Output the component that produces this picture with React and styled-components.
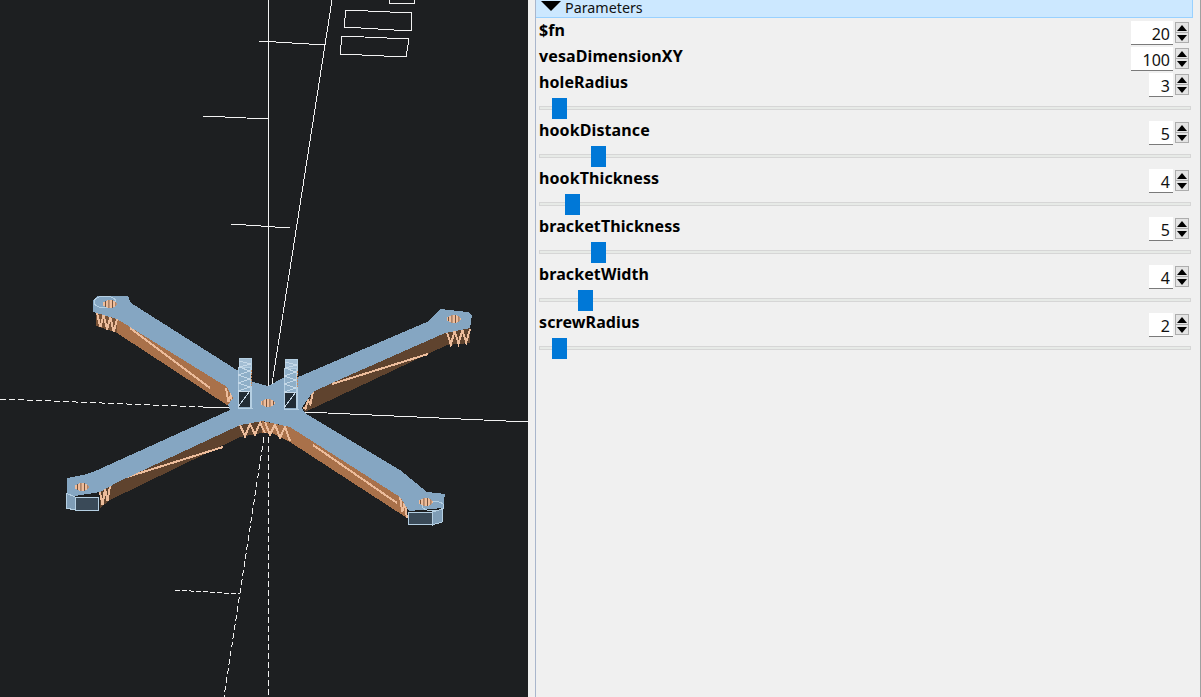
import React from "react";
import styled, { createGlobalStyle } from "styled-components";

const GlobalStyle = createGlobalStyle`
  html, body { margin: 0; height: 100%; overflow: hidden; background: #f0f0f0; }
  #root { height: 100%; }
`;

const Window = styled.div`
  display: flex;
  width: 1201px;
  height: 697px;
  overflow: hidden;
  font-family: "Noto Sans", "Open Sans", sans-serif;
  color: #000;
`;
const Viewport = styled.div`
  flex: 0 0 528px;
  height: 697px;
  background: #1d1f21;
`;
const Drawing = styled.svg`
  display: block;
  shape-rendering: crispEdges;
`;
const Splitter = styled.div`
  flex: 0 0 7px;
  background: #f0f0f0;
  border-right: 1px solid #a9b6cc;
`;
const Panel = styled.div`
  flex: 1;
  display: flex;
  flex-direction: column;
  padding-right: 7px;
  border-right: 1px solid #a0a0a0;
  background: #f0f0f0;
`;
const Header = styled.div`
  display: flex;
  align-items: center;
  gap: 4px;
  box-sizing: border-box;
  height: 18px;
  padding: 0 0 1px 5px;
  background: #cce8ff;
  border-bottom: 1px solid #99d1ff;
  border-right: 1px solid #99d1ff;
  font-size: 14.3px;
  line-height: 16px;
  color: #111;
`;
const Arrow = styled.span`
  width: 0;
  height: 0;
  margin-top: -5px;
  border-left: 10px solid transparent;
  border-right: 10px solid transparent;
  border-top: 10px solid #000;
`;
const Params = styled.div`
  display: flex;
  flex-direction: column;
  padding: 3px 4px 0 3px;
`;
const Row = styled.div`
  display: flex;
  align-items: flex-start;
  justify-content: space-between;
  height: 24px;
  margin-bottom: ${(p) => (p.$plain ? "2px" : "0")};
`;
const Label = styled.div`
  font-size: 16px;
  font-weight: 700;
  letter-spacing: 0.1px;
  line-height: 18px;
`;
const Spin = styled.div`
  display: flex;
  gap: 2px;
`;
const SpinValue = styled.div`
  box-sizing: border-box;
  width: ${(p) => p.$width}px;
  height: 24px;
  padding: 3px 3px 0 0;
  background: #fff;
  border-bottom: 1px solid #7a7a7a;
  text-align: right;
  font-size: 16px;
  line-height: 20px;
  color: #111;
`;
const SpinButtons = styled.div`
  display: flex;
  flex-direction: column;
  margin-top: 1px;
`;
const SpinButton = styled.div`
  box-sizing: border-box;
  display: flex;
  align-items: center;
  justify-content: center;
  width: 14px;
  height: 11px;
  background: #e4e4e4;
  border: 1px solid #adadad;
  margin-top: ${(p) => (p.$down ? "-1px" : "0")};
`;
const Tri = styled.span`
  width: 0;
  height: 0;
  border-left: 5px solid transparent;
  border-right: 5px solid transparent;
  ${(p) => (p.$down ? "border-top: 6px solid #000;" : "border-bottom: 6px solid #000;")}
`;
const Slider = styled.div`
  position: relative;
  height: 24px;
  margin-right: -2px;
`;
const Track = styled.div`
  position: absolute;
  left: 0;
  right: 0;
  top: 9px;
  height: 2px;
  background: #e7eae7;
  border: 1px solid #d6d6d6;
`;
const Thumb = styled.div`
  position: absolute;
  top: 1px;
  width: 15px;
  height: 21px;
  background: #0078d7;
`;

const params = [
  { name: "$fn", value: 20, width: 42 },
  { name: "vesaDimensionXY", value: 100, width: 42 },
  { name: "holeRadius", value: 3, width: 24, thumb: 13 },
  { name: "hookDistance", value: 5, width: 24, thumb: 52 },
  { name: "hookThickness", value: 4, width: 24, thumb: 26 },
  { name: "bracketThickness", value: 5, width: 24, thumb: 52 },
  { name: "bracketWidth", value: 4, width: 24, thumb: 39 },
  { name: "screwRadius", value: 2, width: 24, thumb: 13 },
];

const TOP = "#85a6c2";
const WARM = "#a9714a";
const DARK = "#5f432e";
const PEACH = "#ecbc9b";
const WIRE = "#b5cfe2";

// zigzag of bright triangle edges, as on the arm ends
const zig = (x0, x1, yTop0, yTop1, yBot0, yBot1, n) => {
  const pts = [];
  for (let i = 0; i <= n; i++) {
    const t = i / n;
    const x = x0 + (x1 - x0) * t;
    const y = i % 2 ? yBot0 + (yBot1 - yBot0) * t : yTop0 + (yTop1 - yTop0) * t;
    pts.push(`${x},${y}`);
  }
  return pts.join(" ");
};

const Hole = ({ cx, cy }) => (
  <ellipse cx={cx} cy={cy} rx="7" ry="4" fill="url(#holeStripes)" />
);

const Tower = ({ x, y }) => (
  <g fill="none" stroke={WIRE} strokeWidth="1">
    <rect x={x + 1} y={y} width="12" height="14" fill="#a3bed4" />
    <rect x={x} y={y + 9} width="12" height="41" fill="#8fafc8" />
    <polygon points={`${x + 1},${y + 33} ${x + 12},${y + 33} ${x + 12},${y + 49} ${x + 1},${y + 49}`} fill="#212c35" stroke="none" />
    <polyline points={`${x + 1},${y + 3} ${x + 13},${y + 6} ${x + 1},${y + 9} ${x + 12},${y + 13} ${x},${y + 17} ${x + 12},${y + 21} ${x},${y + 25} ${x + 12},${y + 29} ${x},${y + 33} ${x + 12},${y + 33} ${x},${y + 49}`} stroke="#c6d9e8" />
    <line x1={x} y1={y + 50} x2={x + 15} y2={y + 51} />
    <line x1={x + 13} y1={y + 28} x2={x + 13} y2={y + 51} />
    <line x1={x + 13} y1={y + 12} x2={x + 13} y2={y + 28} stroke="#c98a5c" strokeDasharray="2 1" />
  </g>
);

const Scene = () => (
  <Drawing width="528" height="697" viewBox="0 0 528 697">
    <defs>
      <pattern id="holeStripes" width="3.5" height="4" patternUnits="userSpaceOnUse">
        <rect width="3.5" height="4" fill="#efbd9b" />
        <rect width="1" height="4" fill="#6a4a35" />
      </pattern>
    </defs>

    {/* axes */}
    <g stroke="#f2f2f2" strokeWidth="1" fill="none">
      <line x1="268" y1="0" x2="268" y2="404" />
      <line x1="332" y1="0" x2="272" y2="384" />
      <line x1="0" y1="399" x2="203" y2="407" strokeDasharray="6 3" />
      <line x1="203" y1="407" x2="232" y2="408" />
      <line x1="305" y1="412" x2="528" y2="422" />
      <line x1="264" y1="437" x2="224" y2="697" strokeDasharray="6 3" />
      <line x1="268" y1="437" x2="268" y2="697" strokeDasharray="6 3" />
      <line x1="259" y1="41" x2="325" y2="45" />
      <line x1="203" y1="116" x2="268" y2="119" />
      <line x1="231" y1="224" x2="290" y2="228" />
      <line x1="175" y1="590" x2="240" y2="594" strokeDasharray="5 2" />
      <polygon points="346,10 412,13 411,31 344,27" />
      <polygon points="342,36 409,39 406,57 340,54" />
      <polyline points="389,0 389,3 414,4 415,0" />
    </g>

    {/* side faces */}
    <polygon points="96,312 117,319 227,387 233,398 230,407 117,333 96,326" fill={WARM} />
    <polygon points="96,312 117,319 117,333 96,326" fill="#7a5236" />
    <polygon points="470,328 445,333 332,383 313,392 303,408 305,412 320,405 447,345 470,343" fill={DARK} />
    <polygon points="100,492 118,482 240,425 262,421 262,433 240,437 110,500 100,508" fill={DARK} />
    <polygon points="262,421 290,427 400,497 407,505 407,518 290,442 272,433 262,433" fill={WARM} />

    {/* bright seams */}
    <g stroke={PEACH} fill="none" strokeWidth="2">
      <line x1="130" y1="328" x2="210" y2="388" />
      <line x1="332" y1="384" x2="428" y2="354" />
      <line x1="127" y1="477" x2="223" y2="447" />
      <line x1="313" y1="445" x2="397" y2="503" />
      <polyline points={zig(97, 117, 313, 319, 326, 333, 6)} />
      <polyline points={zig(226, 233, 388, 399, 400, 406, 3)} />
      <polyline points={zig(447, 470, 332, 329, 345, 342, 6)} />
      <polyline points={zig(303, 313, 408, 392, 411, 402, 4)} />
      <polyline points={zig(100, 110, 492, 486, 507, 499, 4)} />
      <polyline points={zig(400, 407, 497, 505, 509, 518, 3)} />
      <polyline points={zig(240, 265, 425, 422, 437, 433, 5)} />
      <polyline points={zig(265, 290, 422, 428, 433, 441, 5)} />
    </g>

    {/* top face */}
    <polygon
      fill={TOP}
      points="93,300 97,296 128,296 131,303 240,372 253,382 268,386 283,378 298,377 427,322 437,313 440,309 468,312 472,315 470,328 445,333 332,383 313,392 305,403 302,408 305,413 400,470 427,492 445,494 443,508 409,511 400,497 290,427 263,421 240,425 118,482 100,492 75,496 67,494 67,478 83,475 93,472 230,410 228,405 233,398 227,387 117,319 93,312"
    />

    {/* end blocks */}
    <g stroke={WIRE} strokeWidth="1">
      <polygon points="75,497 98,497 98,510 75,510" fill="#3a4a58" />
      <polygon points="66,493 75,497 75,510 66,508" fill="#7f9db6" />
      <polygon points="408,512 432,512 432,525 408,524" fill="#3a4a58" />
      <polygon points="432,512 443,509 442,522 432,525" fill="#7f9db6" />
      <ellipse cx="105" cy="302" rx="11" ry="6" fill="none" />
      <ellipse cx="433" cy="506" rx="11" ry="5" fill="none" />
    </g>

    <Hole cx={110} cy={304} />
    <Hole cx={454} cy={319} />
    <Hole cx={82} cy={487} />
    <Hole cx={426} cy={502} />
    <Hole cx={268} cy={403} />

    <Tower x={238} y={358} />
    <Tower x={284} y={359} />
  </Drawing>
);

const App = () => (
  <Window>
    <GlobalStyle />
    <Viewport>
      <Scene />
    </Viewport>
    <Splitter />
    <Panel>
      <Header>
        <Arrow />
        Parameters
      </Header>
      <Params>
        {params.map((p) => (
          <div key={p.name}>
            <Row $plain={p.thumb === undefined}>
              <Label>{p.name}</Label>
              <Spin>
                <SpinValue $width={p.width}>{p.value}</SpinValue>
                <SpinButtons>
                  <SpinButton><Tri /></SpinButton>
                  <SpinButton $down><Tri $down /></SpinButton>
                </SpinButtons>
              </Spin>
            </Row>
            {p.thumb !== undefined && (
              <Slider>
                <Track />
                <Thumb style={{ left: p.thumb }} />
              </Slider>
            )}
          </div>
        ))}
      </Params>
    </Panel>
  </Window>
);

export default App;
